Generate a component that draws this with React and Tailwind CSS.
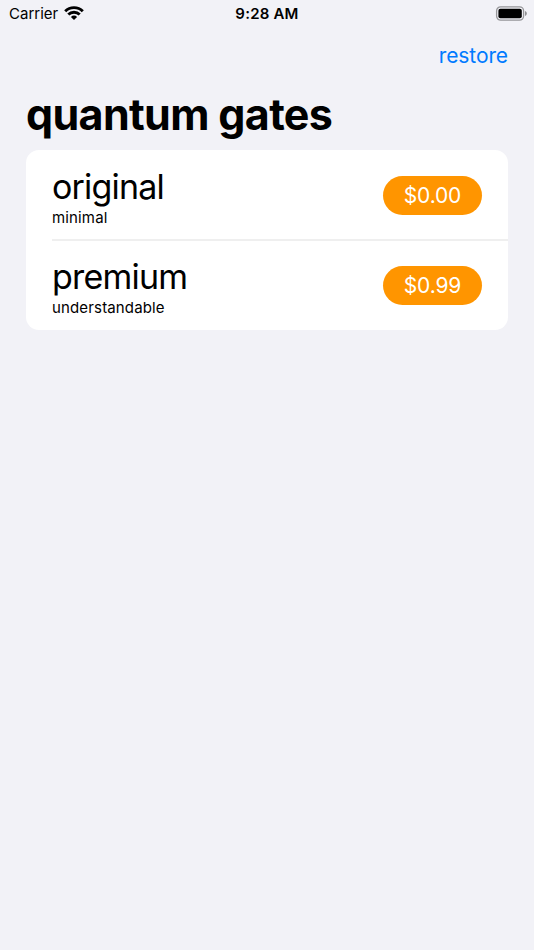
import React from 'react'

const products = [
    { name: 'original', caption: 'minimal', price: '$0.00' },
    { name: 'premium', caption: 'understandable', price: '$0.99' },
];

const WifiIcon = () => (
    <svg className="mb-[2px]" width="20" height="14" viewBox="0 0 20 14" fill="none" stroke="black" strokeWidth="2.9">
        <path d="M1.2 5.2a12.5 12.5 0 0 1 17.6 0" />
        <path d="M4.3 8.6a8 8 0 0 1 11.4 0" />
        <path d="M10 14 6.9 10.9a4.4 4.4 0 0 1 6.2 0Z" fill="black" stroke="none" />
    </svg>
);

const BatteryIcon = () => (
    <svg className="mb-[2px]" width="32" height="15" viewBox="0 0 32 15" fill="none">
        <rect x="1.6" y="0.9" width="27" height="13.2" rx="4" stroke="black" strokeOpacity="0.38" strokeWidth="1.3" />
        <rect x="3.4" y="2.7" width="23.4" height="9.6" rx="2" fill="black" />
        <path d="M30.2 5.100v4.800c.9-.4 1.500-1.400 1.500-2.400S31.100 5.500 30.200 5.100Z" fill="black" fillOpacity="0.5" />
    </svg>
);

const ProductRow = ({ name, caption, price, last }) => (
    <div className="pl-[26px]">
        <div className={`flex items-center justify-between pr-[26px] ${last ? 'h-[89px]' : 'h-[91px] border-b-2 border-[#efefef]'}`}>
            <div className={last ? 'pt-[3px]' : 'pt-[5px]'}>
                <h2 className="text-[34px] leading-[40px] tracking-[-0.8px]">{name}</h2>
                <p className="text-[15px] leading-[21px] tracking-[0.15px]">{caption}</p>
            </div>
            <button className={`h-[39px] w-[99px] rounded-full bg-[#ff9500] text-[21px] leading-[39px] text-white tracking-[-0.15px] ${last ? '' : 'mt-[2px]'}`}>{price}</button>
        </div>
    </div>
);

const App = () => {
    return (
        <div className="min-h-screen bg-[#f2f2f7] font-['Inter',sans-serif] text-black">

            {/* Status bar */}
            <div className="grid h-[28px] grid-cols-3 items-center pr-[7px] pl-[9px] text-[15px]">
                <div className="flex items-center gap-[6px]">
                    <span>Carrier</span>
                    <WifiIcon />
                </div>
                <span className="-ml-[2px] text-center font-semibold tracking-[0.2px]">9:28 AM</span>
                <div className="flex justify-end"><BatteryIcon /></div>
            </div>

            {/* Navigation */}
            <div className="flex h-[56px] items-center justify-end px-[26px]">
                <button className="text-[21px] tracking-[-0.1px] text-[#007aff]">restore</button>
            </div>
            <h1 className="h-[66px] px-[26px] text-[43px] leading-[60px] font-bold tracking-[-0.65px]">quantum gates</h1>

            {/* Products */}
            <div className="mx-[26px] overflow-hidden rounded-[13px] bg-white">
                {products.map((item, index) => (
                    <ProductRow key={item.name} {...item} last={index === products.length - 1} />
                ))}
            </div>
        </div>
    )
}

export default App
